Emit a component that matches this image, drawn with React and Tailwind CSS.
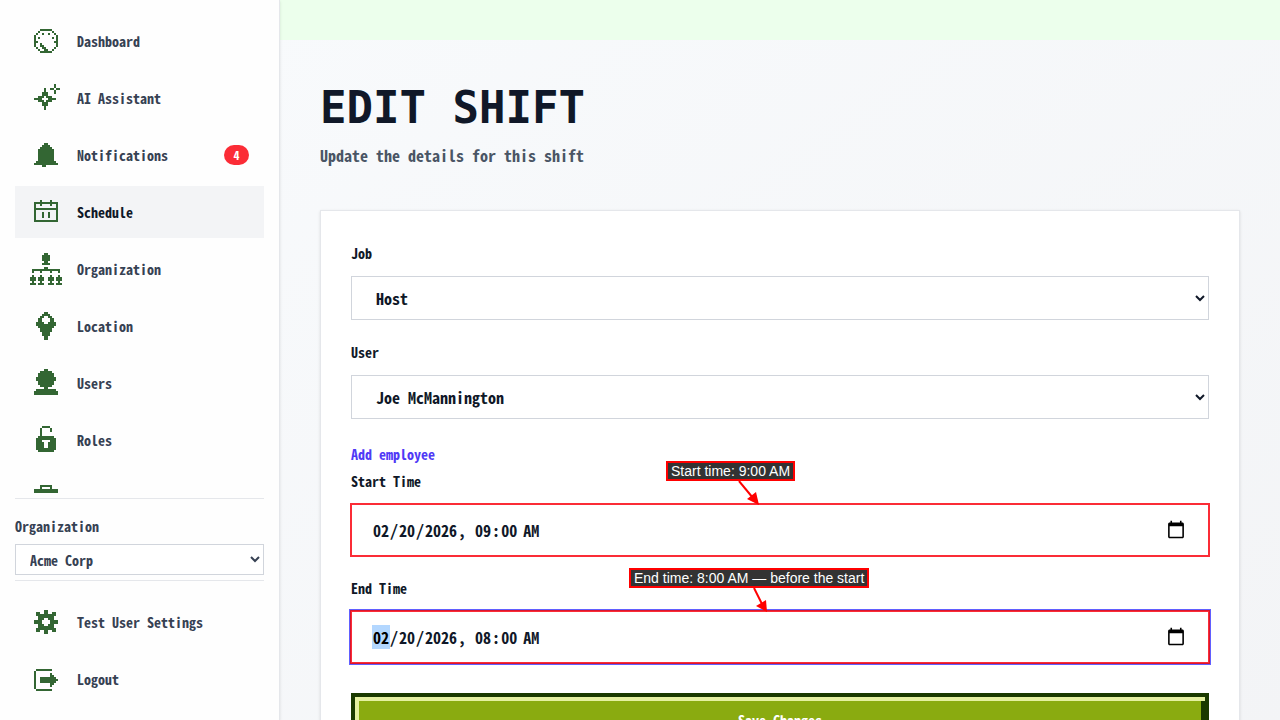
import React, { useState } from 'react';
import clsx from 'clsx';

// each icon is a list of [x, y, width, height] blocks on a 16x16 grid
const ICONS = {
  dashboard: [
    [5, 2, 6, 1], [4, 3, 1, 1], [11, 3, 1, 1], [3, 4, 1, 1], [12, 4, 1, 1], [6, 4, 1, 1], [9, 4, 1, 1],
    [2, 5, 1, 6], [13, 5, 1, 6], [4, 6, 1, 1], [11, 6, 1, 1], [3, 8, 1, 1], [12, 8, 1, 1],
    [5, 9, 1, 2], [6, 10, 1, 2], [7, 11, 1, 2], [8, 12, 1, 1],
    [3, 11, 1, 1], [12, 11, 1, 1], [4, 12, 1, 1], [11, 12, 1, 1], [5, 13, 6, 1],
  ],
  assistant: [
    [12, 1, 1, 2], [12, 4, 1, 2], [10, 3, 2, 1], [13, 3, 2, 1],
    [7, 3, 1, 2], [6, 5, 3, 2], [4, 7, 3, 1], [8, 7, 3, 1], [2, 8, 4, 1], [9, 8, 4, 1],
    [4, 9, 3, 1], [8, 9, 3, 1], [6, 10, 3, 2], [7, 12, 1, 2],
  ],
  bell: [[7, 2, 2, 1], [6, 3, 4, 1], [5, 4, 6, 1], [4, 5, 8, 6], [3, 11, 10, 1], [2, 12, 12, 1], [6, 13, 2, 1]],
  schedule: [
    [5, 2, 1, 3], [10, 2, 1, 3], [2, 3, 12, 1], [2, 6, 12, 1], [2, 12, 12, 1],
    [2, 3, 1, 10], [13, 3, 1, 10], [6, 8, 1, 3], [9, 8, 1, 3],
  ],
  organization: [
    [7, 0, 2, 1], [6, 1, 4, 3], [7, 4, 2, 1], [6, 5, 4, 1], [7, 7, 2, 1], [1, 8, 14, 1],
    [1, 9, 1, 1], [5, 9, 1, 1], [10, 9, 1, 1], [14, 9, 1, 1],
    [1, 11, 1, 4], [0, 12, 3, 2], [0, 15, 3, 1],
    [5, 11, 1, 4], [4, 12, 3, 2], [4, 15, 3, 1],
    [10, 11, 1, 4], [9, 12, 3, 2], [9, 15, 3, 1],
    [14, 11, 1, 4], [13, 12, 3, 2], [13, 15, 3, 1],
  ],
  location: [
    [7, 1, 2, 1], [6, 2, 4, 1], [5, 3, 2, 1], [9, 3, 2, 1], [4, 4, 2, 2], [10, 4, 2, 2],
    [3, 6, 4, 1], [9, 6, 4, 1], [3, 7, 10, 1], [4, 8, 8, 1], [5, 9, 6, 2], [6, 11, 4, 2], [7, 13, 2, 2],
  ],
  user: [
    [7, 1, 2, 1], [5, 2, 6, 1], [4, 3, 8, 2], [3, 5, 10, 2], [4, 7, 8, 2], [5, 9, 6, 1],
    [7, 10, 2, 1], [3, 11, 10, 1], [2, 12, 12, 2],
  ],
  lock: [
    [6, 1, 4, 1], [5, 2, 1, 4], [10, 2, 1, 2], [4, 6, 8, 1], [3, 7, 10, 1], [3, 8, 3, 1], [10, 8, 3, 1],
    [3, 9, 4, 3], [9, 9, 4, 3], [3, 12, 10, 1], [4, 13, 8, 1],
  ],
  briefcase: [[5, 2, 6, 1], [5, 3, 1, 1], [10, 3, 1, 1], [2, 4, 12, 4], [2, 9, 12, 5]],
  gear: [
    [7, 2, 2, 2], [3, 3, 2, 1], [11, 3, 2, 1], [3, 4, 10, 1], [4, 5, 8, 1], [4, 6, 3, 1], [9, 6, 3, 1],
    [2, 7, 4, 2], [10, 7, 4, 2], [4, 9, 3, 1], [9, 9, 3, 1], [4, 10, 8, 1], [3, 11, 10, 1],
    [3, 12, 2, 1], [11, 12, 2, 1], [7, 12, 2, 2],
  ],
  logout: [
    [3, 3, 8, 1], [2, 4, 1, 9], [3, 13, 8, 1],
    [5, 7, 8, 3], [13, 8, 1, 1], [10, 5, 1, 7], [11, 6, 1, 5],
  ],
};

const NAV = [
  { label: 'Dashboard', icon: 'dashboard' },
  { label: 'AI Assistant', icon: 'assistant' },
  { label: 'Notifications', icon: 'bell', badge: 4 },
  { label: 'Schedule', icon: 'schedule', active: true },
  { label: 'Organization', icon: 'organization' },
  { label: 'Location', icon: 'location' },
  { label: 'Users', icon: 'user' },
  { label: 'Roles', icon: 'lock' },
  { icon: 'briefcase' },
];

const PixelIcon = ({ name }) => (
  <svg width="32" height="32" viewBox="0 0 16 16" fill="#336633" shapeRendering="crispEdges" className="shrink-0" aria-hidden="true">
    {ICONS[name].map(([x, y, w, h]) => <rect key={`${x}-${y}-${w}-${h}`} x={x} y={y} width={w} height={h} />)}
  </svg>
);

const NavItem = ({ label, icon, badge, active }) => (
  <a
    href="#"
    aria-label={label || icon}
    className={clsx(
      'flex h-[52px] shrink-0 items-center gap-[15px] px-[15px] text-sm',
      active ? 'bg-gray-100 text-gray-900' : 'text-gray-700'
    )}
  >
    <PixelIcon name={icon} />
    {label && <span className="flex-1 whitespace-nowrap">{label}</span>}
    {badge && (
      <span className="flex h-5 w-[25px] items-center justify-center rounded-full bg-red-500 text-xs text-white">{badge}</span>
    )}
  </a>
);

const Field = ({ id, label, children }) => (
  <div className="relative mb-5 flex flex-col">
    <label htmlFor={id} className="mb-[10px] text-sm leading-[25px] text-gray-900">{label}</label>
    {children}
  </div>
);

const SelectField = ({ id, label, options }) => (
  <Field id={id} label={label}>
    <select id={id} className="h-11 w-full border border-gray-300 bg-white px-5 text-base text-gray-900">
      {options.map(o => <option key={o}>{o}</option>)}
    </select>
  </Field>
);

const dateInput = clsx(
  'h-[52px] w-full border border-red-500 bg-white px-5 text-base text-gray-900 outline-none',
  '[&::-webkit-calendar-picker-indicator]:h-5 [&::-webkit-calendar-picker-indicator]:w-5'
);

const Arrow = ({ className, line, head }) => (
  <svg width="32" height="24" viewBox="0 0 32 24" className={className} aria-hidden="true">
    <path d={line} stroke="#ff0000" strokeWidth="2" />
    <path d={head} fill="#ff0000" />
  </svg>
);

const noteText = 'block w-max border-2 border-[#ff0000] bg-[#333333] px-[3px] font-["Liberation_Sans",Arial,sans-serif] text-sm leading-4 font-normal text-white';

const App = () => {
  const [start, setStart] = useState('2026-02-20T09:00');
  const [end, setEnd] = useState('2026-02-20T08:00');

  return (
    <div className='flex h-screen overflow-hidden font-["Noto_Sans_Mono_CJK_SC","Liberation_Mono",monospace] font-bold'>
      <aside className="z-10 flex w-[280px] shrink-0 flex-col border-r border-gray-200 bg-[#fefefe] p-[15px] shadow-sm">
        <nav className="mb-[5px] flex min-h-0 flex-1 flex-col gap-[5px] overflow-y-auto [scrollbar-width:none]">
          {NAV.map(item => <NavItem key={item.icon} {...item} />)}
        </nav>
        <div className="flex flex-col border-y border-gray-200 pt-[15px] pb-[5px]">
          <label htmlFor="org" className="mb-[5px] text-sm leading-[25px] text-gray-700">Organization</label>
          <select id="org" className="h-[31px] border border-gray-300 bg-white px-[10px] text-sm text-gray-700">
            <option>Acme Corp</option>
          </select>
        </div>
        <div className="flex flex-col gap-[5px] pt-[15px]">
          <NavItem label="Test User Settings" icon="gear" />
          <NavItem label="Logout" icon="logout" />
        </div>
      </aside>

      <div className="min-w-0 flex-1 overflow-y-auto bg-linear-to-br from-[#f8fafc] to-gray-100 [scrollbar-width:none]">
        <div className="h-10 bg-[#ecffec]" />
        <main className="p-10">
          <h1 className='font-["DejaVu_Sans_Mono",monospace] text-[44px] leading-[55px] text-gray-900'>EDIT SHIFT</h1>
          <p className="mt-[10px] mb-[45px] text-base leading-5 text-gray-600">Update the details for this shift</p>

          <form className="flex flex-col border border-gray-200 bg-white p-[30px] shadow-sm" onSubmit={e => e.preventDefault()}>
            <SelectField id="job" label="Job" options={['Host']} />
            <SelectField id="user" label="User" options={['Joe McMannington']} />
            <a href="#" className="self-start text-sm leading-[30px] text-indigo-600">Add employee</a>

            <Field id="start" label="Start Time">
              <input
                id="start"
                type="datetime-local"
                value={start}
                onChange={e => setStart(e.target.value)}
                className={clsx(dateInput, 'shadow-[0_0_0_1px_#fb2c36]')}
              />
              <div className="absolute bottom-[51px] left-1/2 -ml-[114px]">
                <span className={noteText}>Start time: 9:00 AM</span>
                <Arrow className="ml-[68px] block" line="M5 0L19 17" head="M25 24L13 18L22 11Z" />
              </div>
            </Field>

            <Field id="end" label="End Time">
              <input
                id="end"
                type="datetime-local"
                value={end}
                onChange={e => setEnd(e.target.value)}
                className={clsx(
                  dateInput,
                  'shadow-[0_0_0_1px_#d9152e,0_0_0_2px_#615fff]',
                  '[&::-webkit-datetime-edit-month-field]:bg-[#b3d7ff] [&::-webkit-datetime-edit-month-field]:text-black'
                )}
              />
              <div className="absolute bottom-[51px] left-1/2 -ml-[151px]">
                <span className={noteText}>End time: 8:00 AM — before the start</span>
                <Arrow className="ml-[114px] block" line="M11 0L19 16" head="M24 24L13 18L23 12Z" />
              </div>
            </Field>

            <button
              type="submit"
              className="mt-[10px] h-[54px] border-4 border-[#1a3a00] bg-[#8aab10] text-sm text-white shadow-[inset_0_4px_#e4f0a0,inset_-4px_-4px_#1a3a00,inset_4px_0_#e4f0a0]"
            >
              Save Changes
            </button>
          </form>
        </main>
      </div>
    </div>
  );
};

export default App;
